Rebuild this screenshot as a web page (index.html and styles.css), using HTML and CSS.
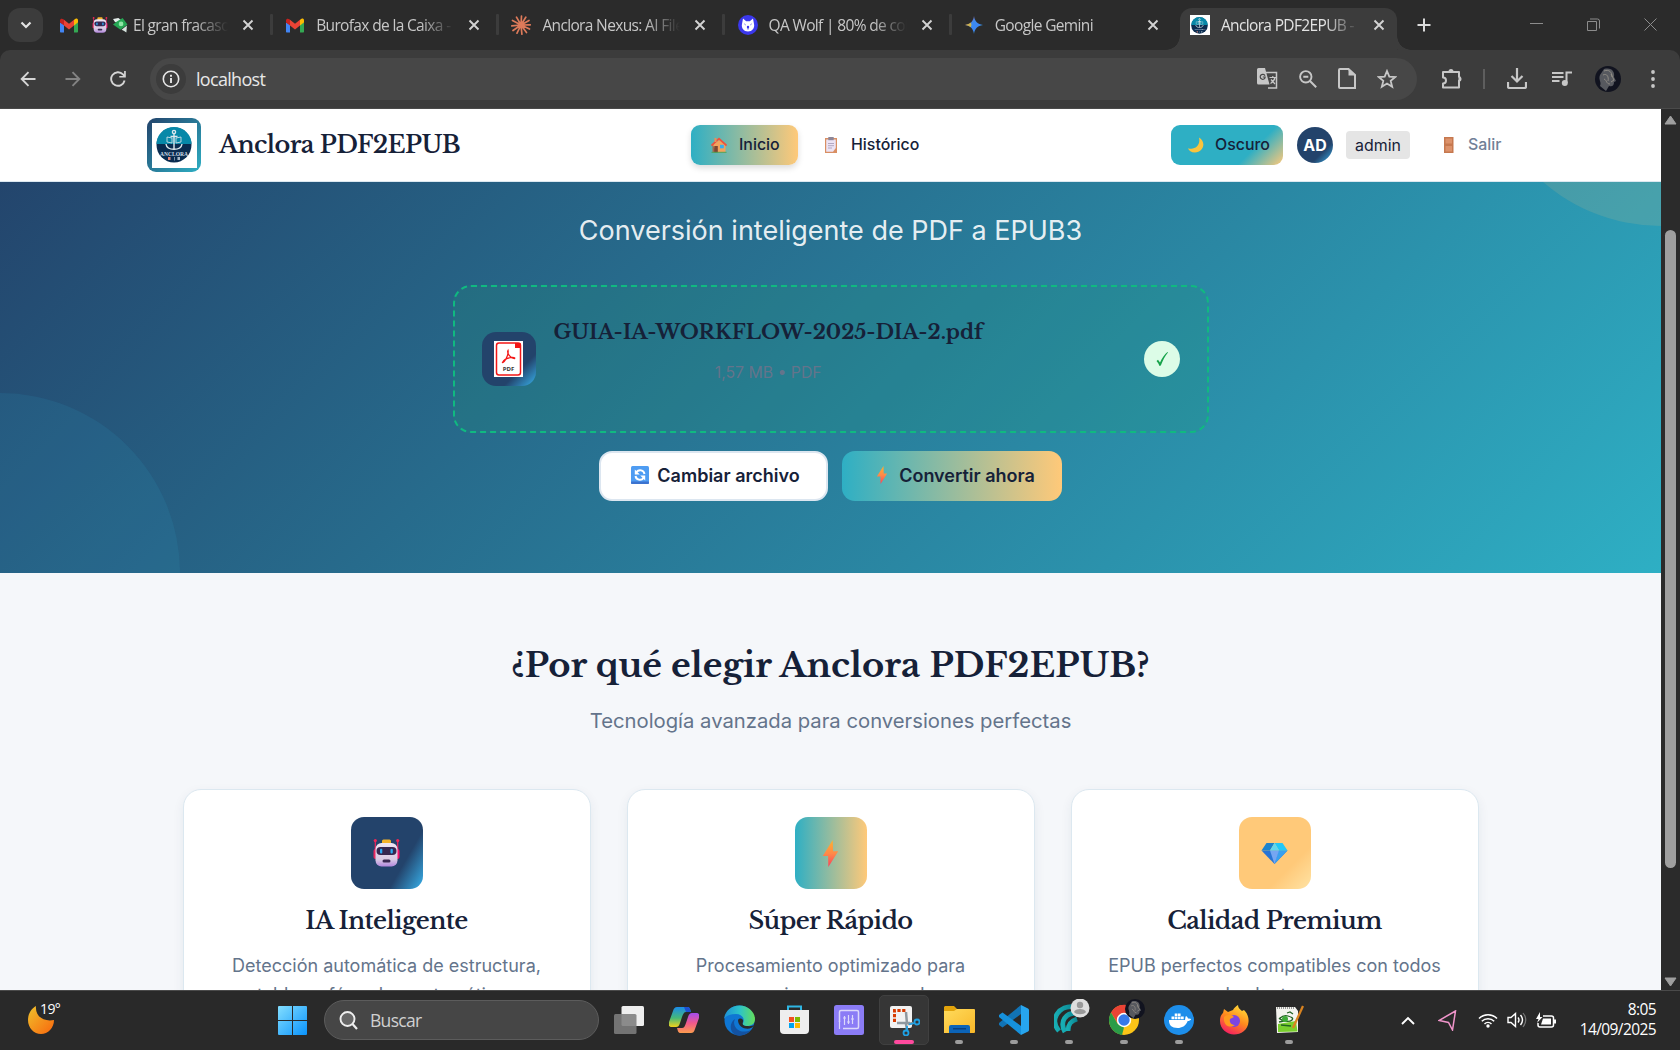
FILE: index.html
```html
<!DOCTYPE html>
<html lang="es">
<head>
<meta charset="utf-8">
<title>Anclora PDF2EPUB</title>
<link rel="stylesheet" href="styles.css">
</head>
<body>
<svg class="defs" width="0" height="0" aria-hidden="true">
  <defs>
    <linearGradient id="g-bolt" x1="0" y1="0" x2="0" y2="1"><stop offset="0" stop-color="#ffb02e"/><stop offset=".5" stop-color="#ff8a48"/><stop offset="1" stop-color="#f8405c"/></linearGradient>
    <linearGradient id="g-face" x1="0" y1="0" x2="0" y2="1"><stop offset="0" stop-color="#efe5f3"/><stop offset=".7" stop-color="#d9c9e4"/><stop offset="1" stop-color="#b287dc"/></linearGradient>
    <linearGradient id="g-moon" x1="0" y1="0" x2="1" y2="1"><stop offset="0" stop-color="#efc22c"/><stop offset="1" stop-color="#f9660d"/></linearGradient>
    <linearGradient id="g-edge" x1="0" y1="0" x2="1" y2="0"><stop offset="0" stop-color="#1d8fd8"/><stop offset=".5" stop-color="#2cc3c9"/><stop offset="1" stop-color="#64de5b"/></linearGradient>
    <linearGradient id="g-gem" x1="0" y1="0" x2="1" y2="1"><stop offset="0" stop-color="#ef4b46"/><stop offset=".4" stop-color="#3c8af0"/><stop offset=".65" stop-color="#3c86f2"/><stop offset="1" stop-color="#2ca454"/></linearGradient>
    <linearGradient id="g-win" x1="0" y1="0" x2="1" y2="1"><stop offset="0" stop-color="#83deff"/><stop offset="1" stop-color="#0a93fb"/></linearGradient>
    <linearGradient id="g-cop1" x1="0" y1="0" x2="0" y2="1"><stop offset="0" stop-color="#1b8bea"/><stop offset=".55" stop-color="#46b978"/><stop offset="1" stop-color="#f3d21b"/></linearGradient>
    <linearGradient id="g-cop2" x1="0" y1="0" x2="0" y2="1"><stop offset="0" stop-color="#a34df0"/><stop offset=".5" stop-color="#f1588c"/><stop offset="1" stop-color="#fc9c4e"/></linearGradient>
    <linearGradient id="g-fold" x1="0" y1="0" x2="1" y2="1"><stop offset="0" stop-color="#ffdb5c"/><stop offset="1" stop-color="#f9b728"/></linearGradient>
    <linearGradient id="g-fox" x1=".8" y1="0" x2=".3" y2="1"><stop offset="0" stop-color="#ffe23b"/><stop offset=".5" stop-color="#ff8a1d"/><stop offset="1" stop-color="#f51c62"/></linearGradient>
    <linearGradient id="g-cyan" x1="0" y1="0" x2="1" y2="0"><stop offset="0" stop-color="#18aeb4"/><stop offset="1" stop-color="#0a8491"/></linearGradient>

    <symbol id="gmail" viewBox="0 0 18 14"><path fill="#4285f4" d="M0 4v9c0 .6.4 1 1 1h3V6z"/><path fill="#34a853" d="M14 14h3c.6 0 1-.4 1-1V4l-4 2z"/><path fill="#fbbc04" d="M14 1.500V7l4-3V2c0-2-2-2.500-3.300-1.200z"/><path fill="#ea4335" d="M4 7V1.300l5 4 5-4V7l-5 3.900z"/><path fill="#c5221f" d="M0 2v2l4 3V1.300L3.300.8C2-.4 0 .2 0 2z"/></symbol>
    <symbol id="robot" viewBox="0 0 26 28"><path stroke="#f0225c" stroke-width="1.200" d="M1.800 2v12M24.200 2v12"/><circle cx="1.800" cy="1.600" r="1.600" fill="#ef2757"/><circle cx="24.200" cy="1.600" r="1.600" fill="#ef2757"/><rect y="10" width="4" height="10" rx="2" fill="#e8265e"/><rect x="22" y="10" width="4" height="10" rx="2" fill="#f6146c"/><rect x="8.500" y=".5" width="9" height="5" rx="1.500" fill="#f3b22b"/><rect x="2" y="4" width="22" height="23.500" rx="6" fill="url(#g-face)"/><rect x="3" y="8" width="20" height="8" rx="4" fill="#362750"/><rect x="6.500" y="9.800" width="2.300" height="4.600" rx="1" fill="#2ca9f2"/><rect x="17" y="9.800" width="2.300" height="4.600" rx="1" fill="#2ca9f2"/><rect x="9" y="20.500" width="8" height="3" rx="1.500" fill="#3a2951"/></symbol>
    <symbol id="money" viewBox="0 0 14 14"><path fill="#e6eeec" d="M0 1l5-1 4 3-7 1z"/><path fill="#25a653" d="M4 3l5-3 4.500 6L7 11 0 6z"/><circle cx="7.500" cy="5.500" r="2.200" fill="#8ee6a6"/><path fill="#d7e4df" d="M8 11l5-4-.5 6.500L10 12z"/></symbol>
    <symbol id="close" viewBox="0 0 12 12"><path d="M1.500 1.500l9 9m0-9l-9 9" fill="none" stroke="currentColor" stroke-width="1.900"/></symbol>
    <symbol id="burst" viewBox="0 0 20 20"><path stroke="#dd7a5a" stroke-width="1.700" stroke-linecap="round" d="M10 10L10.500 1M10 10L14.800 2.200M10 10L18 5.500M10 10L19.300 9.800M10 10L18.500 14M10 10L15.500 17.500M10 10L10.900 19.200M10 10L6 18.200M10 10L2 15.500M10 10L.8 10.800M10 10L1.500 5.500M10 10L5.500 2.200"/></symbol>
    <symbol id="wolf" viewBox="0 0 20 20"><circle cx="10" cy="10" r="10" fill="#3b38ec"/><path fill="#fff" d="M5 3.500l3.200 2.800h3.600L15 3.500l1 5.500c1 4-2 7.500-6 7.500S3 13 4 9z"/><path stroke="#3b38ec" d="M6.500 9l1 .8m6-.8l-1 .8M10 13v1.500"/><circle cx="10" cy="12" r="1.200" fill="#3b38ec"/></symbol>
    <symbol id="gemini" viewBox="0 0 18 18"><path fill="url(#g-gem)" d="M9 0c.8 5.500 3.500 8.200 9 9-5.500.8-8.200 3.500-9 9-.8-5.500-3.500-8.200-9-9 5.500-.8 8.200-3.500 9-9z"/><path fill="#fbc31c" d="M0 9c2.500-.4 4.400-1.200 5.900-2.400L6.500 9l-.7 2.200C4.300 10.100 2.400 9.300 0 9z" opacity=".75"/></symbol>
    <symbol id="anchor" viewBox="0 0 36 36"><circle cx="18" cy="18" r="17.500" fill="#0a2c50"/><path d="M.5 17a17.500 17 0 0 1 35 0z" fill="#0788a8"/><g fill="none" stroke="#dfe9ed" stroke-width="1.400"><circle cx="18" cy="5" r="1.600"/><path d="M18 7v15M14.500 9.500h7M10 17c.5 3.500 4 5.300 8 5.300s7.500-1.800 8-5.300"/><path stroke-width=".8" d="M11 10l5 1v5l-5-1zM25 10l-5 1v5l5-1z"/></g><text x="18" y="28.500" text-anchor="middle" font-family="Liberation Serif" font-size="5.500" font-weight="bold" fill="#cfdde5">ANCLORA</text><path fill="#e88a7a" d="M12 30h2.500v3H12z"/><path fill="#a9bac8" d="M18 30h.7v3.500H18zM21.500 30H24v3h-2.500z"/></symbol>
    <symbol id="bolt" viewBox="0 0 16 28"><path fill="url(#g-bolt)" d="M10.300 0L0 16.500h5.500L5.800 28 16 11.700h-5.300z"/></symbol>
    <symbol id="house" viewBox="0 0 16 16"><path fill="#a3694b" d="M1.500 7.500h5.800V15.500H1.500z"/><path fill="#f3a35d" d="M2 8l6-5 6.500 5v7.500H6z"/><path fill="#7d4533" d="M3.300 9h3.500v6.500H3.300z"/><path fill="#35aef0" d="M9 7.800h3.800v3.500H9z"/><path fill="none" stroke="#f0503c" stroke-width="1.700" d="M.4 8.500L8 1.600l7.600 6.900"/><path fill="#ef8e57" d="M3.500 1h2v4h-2z"/><path fill="#4ca45b" d="M.5 14.800h15v1H.5z"/></symbol>
    <symbol id="clip" viewBox="0 0 12 16"><path fill="#d98f63" d="M0 1h12v15H0z"/><path fill="#ece3f4" d="M1.200 2.500h9.600v8.500L8 14.800H1.200z"/><path fill="#8d8698" d="M3.300 0h5.400v3.200H3.300z"/><path stroke="#aba0bc" stroke-width=".9" d="M3 6.500h6M3 8.700h6M3 11h4"/></symbol>
    <symbol id="moon" viewBox="0 0 16 16"><path fill="#f9c43d" d="M11 .5c8 5 4 15-4 15-4 0-6-1.800-7-4.300C6 13.500 13 9 11 .5z"/></symbol>
    <symbol id="door" viewBox="0 0 10 16"><path fill="#c6784f" d="M0 0h9.500v16H0z"/><path fill="#dc926b" d="M1.500 1.500h6.500v5H1.500zM1.500 9h6.500v5.500H1.500z"/></symbol>
    <symbol id="refresh" viewBox="0 0 18 18"><rect width="18" height="18" rx="1.500" fill="#4e9cf2"/><rect y="15.500" width="18" height="2.500" rx="1" fill="#3c73cf"/><path fill="none" stroke="#fff" stroke-width="1.900" d="M13.500 8c-.6-4-5.500-5-8.300-1.800M4.500 10c.6 4 5.500 5 8.300 1.800"/><path fill="#fff" d="M3.800 3.500v5h5zM14.200 14.500v-5h-5z"/></symbol>
    <symbol id="diamond" viewBox="0 0 26 21"><path fill="#2874d5" d="M0 7.500h26L13 21z"/><path fill="#39a0ee" d="M17 7.500h9L13 21z"/><path fill="#75a6f2" d="M8.500 7.500h9L13 21z"/><path fill="#1b83cf" d="M5 0h8L8.500 7.500H0z"/><path fill="#22c8f8" d="M13 0h8l5 7.500h-8.500z"/><path fill="#62d7ee" d="M13 0l4.500 7.500h-9z"/></symbol>
    <symbol id="person" viewBox="0 0 26 26"><circle cx="13" cy="13" r="13" fill="#11131f"/><path fill="#57595f" d="M9 3c8-2 11 3 10 8l2 4-2 1c0 4-2 5-5 4l-3 5-6-5c2-4-2-6 0-11z"/><path fill="none" stroke="#9b958d" stroke-width=".8" d="M9 5c5-2 8 1 8 6M8 9c4-2 6 2 5 6M9 13c3 1 2 5 6 5M16 8l3 6-3 2"/></symbol>
  </defs>
</svg>

<div class="tabstrip">
  <div class="tabsearch"><svg width="12" height="8" viewBox="0 0 12 8"><path d="M1.500 1.500L6 6l4.500-4.500" fill="none" stroke="#e3e3e3" stroke-width="2.200"/></svg></div>
  <div class="tab"><span class="fav"><svg width="18" height="15"><use href="#gmail"/></svg></span><span class="ttl"><svg width="16" height="16"><use href="#robot"/></svg><svg width="15" height="15"><use href="#money"/></svg>El gran fracaso</span><svg class="x" width="12" height="12"><use href="#close"/></svg></div>
  <div class="tab"><span class="fav"><svg width="18" height="15"><use href="#gmail"/></svg></span><span class="ttl">Burofax de la Caixa -</span><svg class="x" width="12" height="12"><use href="#close"/></svg></div>
  <div class="tab"><span class="fav"><svg width="20" height="20"><use href="#burst"/></svg></span><span class="ttl">Anclora Nexus: AI File</span><svg class="x" width="12" height="12"><use href="#close"/></svg></div>
  <div class="tab"><span class="fav"><svg width="20" height="20"><use href="#wolf"/></svg></span><span class="ttl">QA Wolf | 80% de cob</span><svg class="x" width="12" height="12"><use href="#close"/></svg></div>
  <div class="tab nosep"><span class="fav"><svg width="18" height="18"><use href="#gemini"/></svg></span><span class="ttl">Google Gemini</span><svg class="x" width="12" height="12"><use href="#close"/></svg></div>
  <div class="tab active"><span class="fav white"><svg width="17" height="17"><use href="#anchor"/></svg></span><span class="ttl">Anclora PDF2EPUB -</span><svg class="x" width="12" height="12"><use href="#close"/></svg></div>
  <svg class="newtab" width="14" height="14" viewBox="0 0 14 14"><path d="M7 .5v13M.5 7h13" stroke="#dcdcdc" stroke-width="2"/></svg>
  <div class="winctl">
    <svg width="13" height="13" viewBox="0 0 13 13"><path d="M0 5.500h13"/></svg>
    <svg width="13" height="13" viewBox="0 0 13 13"><path d="M.5 3.500h9v9h-9zM3 1h7.500a2 2 0 0 1 2 2v7.500"/></svg>
    <svg width="13" height="13" viewBox="0 0 13 13"><path d="M.5.500l12 12m0-12l-12 12"/></svg>
  </div>
</div>

<div class="toolbar">
  <div class="navs">
    <svg width="16" height="16" viewBox="0 0 16 16"><path d="M15.500 8H2m6.500-6.800L1.700 8l6.800 6.800" fill="none" stroke="#d5d5d5" stroke-width="1.900"/></svg>
    <svg width="16" height="16" viewBox="0 0 16 16"><path d="M.5 8H14M7.500 1.200L14.300 8l-6.800 6.800" fill="none" stroke="#838383" stroke-width="1.900"/></svg>
    <svg width="16" height="16" viewBox="0 0 16 16"><path d="M14.600 9.500A6.800 6.800 0 1 1 13 3.400l1.500 1.800" fill="none" stroke="#d5d5d5" stroke-width="1.900"/><path d="M15.800 0v6.500H9.300V5h4.800V0z" fill="#d5d5d5"/></svg>
  </div>
  <div class="omni">
    <span class="info"><svg width="18" height="18" viewBox="0 0 18 18"><circle cx="9" cy="9" r="7.700" fill="none" stroke="#e6e6e6" stroke-width="1.600"/><path d="M9 8v5M9 4.700v2" stroke="#e6e6e6" stroke-width="1.900"/></svg></span>
    <span class="url">localhost</span>
    <div class="omni-icons">
      <svg width="21" height="21" viewBox="0 0 21 21"><path d="M9 4.500h10.500v15.500H11" fill="none" stroke="#c7c7c7" stroke-width="1.500"/><path d="M1.500 0H8l4.500 16.500H1.500A1.500 1.500 0 0 1 0 15V1.500A1.500 1.500 0 0 1 1.500 0z" fill="#c7c7c7"/><path d="M8 7.800A2.500 2.500 0 1 0 8.200 9H5.800" stroke="#484848" fill="none" stroke-width="1.200"/><path d="M12.500 9.500h6.500M15.800 8v1.500M18 9.500c-.7 3-2.500 4.800-4.500 6M14 11.500l4 4.500" stroke="#c7c7c7" fill="none" stroke-width="1.200"/></svg>
      <svg width="18" height="18" viewBox="0 0 18 18"><circle cx="6.800" cy="6.800" r="5.700" fill="none" stroke="#c7c7c7" stroke-width="1.900"/><path d="M11 11l6.200 6.200M4.300 6.800h5" stroke="#c7c7c7" stroke-width="2"/></svg>
      <svg width="18" height="21" viewBox="0 0 18 21"><path d="M2 1h8.500L17 7v13H2a1 1 0 0 1-1-1V2a1 1 0 0 1 1-1z" fill="none" stroke="#c7c7c7" stroke-width="2"/><path d="M10.500 1v6.500H17z" fill="#c7c7c7"/></svg>
      <svg width="20" height="20" viewBox="0 0 20 20"><path d="M10 2l2.300 5.600 6 .4-4.600 3.900 1.500 5.900L10 14.600l-5.200 3.200 1.500-5.900L1.700 8l6-.4z" fill="none" stroke="#c7c7c7" stroke-width="1.800"/></svg>
    </div>
  </div>
  <div class="tools">
    <svg width="21" height="21" viewBox="0 0 21 21"><path d="M2 5.500V4h16v5h.5v3.500H18v7H2v-4c4 0 4-6 0-6z" fill="none" stroke="#c7c7c7" stroke-width="2" stroke-linejoin="round"/><path d="M7.500 3.500a2.500 2.500 0 0 1 5 0zM18 8.500a2.500 2.500 0 0 1 0 5z" fill="#c7c7c7"/></svg>
    <i class="tsep"></i>
    <svg width="20" height="21" viewBox="0 0 20 21"><path d="M10 0v13M4.500 8l5.500 5.500L15.500 8M1 14v4.500a1.500 1.500 0 0 0 1.500 1.500h15a1.500 1.500 0 0 0 1.500-1.500V14" fill="none" stroke="#c7c7c7" stroke-width="2.200"/></svg>
    <svg width="20" height="16" viewBox="0 0 20 16"><path d="M0 2h11.500M0 6h11.500M0 10h7.500M14.500 12V1.500H20" fill="none" stroke="#c7c7c7" stroke-width="2"/><circle cx="12.800" cy="12" r="3" fill="#c7c7c7"/></svg>
    <svg width="26" height="26"><use href="#person"/></svg>
    <svg width="4" height="18" viewBox="0 0 4 18"><g fill="#c7c7c7"><circle cx="2" cy="2" r="1.900"/><circle cx="2" cy="9" r="1.900"/><circle cx="2" cy="16" r="1.900"/></g></svg>
  </div>
</div>

<div class="viewport">
  <div class="page">
    <header class="header">
      <div class="brand"><div class="logo"><span><svg width="36" height="36"><use href="#anchor"/></svg></span></div><span class="brand-name">Anclora PDF2EPUB</span></div>
      <nav class="nav">
        <a class="pill current"><svg width="16" height="16"><use href="#house"/></svg>Inicio</a>
        <a class="pill"><svg width="16" height="16"><use href="#clip"/></svg>Histórico</a>
      </nav>
      <div class="account">
        <a class="theme"><svg width="16" height="16"><use href="#moon"/></svg>Oscuro</a>
        <span class="avatar">AD</span>
        <span class="user">admin</span>
        <a class="exit"><svg width="10" height="16"><use href="#door"/></svg>Salir</a>
      </div>
    </header>
    <section class="hero">
      <p class="lead">Conversión inteligente de PDF a EPUB3</p>
      <div class="drop">
        <div class="fileicon"><svg width="29" height="36" viewBox="0 0 29 36"><path fill="#fff" d="M0 0h29v36H0z"/><rect x="2.500" y="2" width="24" height="32" rx="2.500" fill="none" stroke="#f31616" stroke-width="1.500"/><path d="M21 2v5h5.500V2z" fill="#f31616"/><path d="M14 9.500c-1.200 2 2 8 6.500 8 2-1.500-9-2-12 4 1.500 1 6.500-7.500 5.500-12z" fill="none" stroke="#f31616" stroke-width="1.300"/><text x="14.500" y="29.500" text-anchor="middle" font-family="Open Sans" font-weight="700" font-size="6" fill="#333">PDF</text></svg></div>
        <div class="fileinfo"><h4>GUIA-IA-WORKFLOW-2025-DIA-2.pdf</h4><p>1,57 MB • PDF</p></div>
        <div class="ok"><svg width="12" height="14" viewBox="0 0 12 14"><path d="M.5 9l1.500-1.200L4 10.500C6 6 8.500 2.500 11.500 0L12 .5C9 4 7 8 4.800 13.500L3.500 14C2.800 12 1.800 10.300.5 9z" fill="#16a34a"/></svg></div>
      </div>
      <div class="actions">
        <a class="btn light"><svg width="18" height="18"><use href="#refresh"/></svg>Cambiar archivo</a>
        <a class="btn warm"><svg width="18" height="18"><use href="#bolt"/></svg>Convertir ahora</a>
      </div>
    </section>
    <section class="why">
      <h2>¿Por qué elegir Anclora PDF2EPUB?</h2>
      <p class="sub">Tecnología avanzada para conversiones perfectas</p>
      <div class="cards">
        <article class="card"><div class="ico navy"><svg width="27" height="28"><use href="#robot"/></svg></div><h3>IA Inteligente</h3><p>Detección automática de estructura, tablas y fórmulas matemáticas</p></article>
        <article class="card"><div class="ico mix"><svg width="27" height="27"><use href="#bolt"/></svg></div><h3>Súper Rápido</h3><p>Procesamiento optimizado para conversiones en segundos</p></article>
        <article class="card"><div class="ico gold"><svg width="27" height="21"><use href="#diamond"/></svg></div><h3>Calidad Premium</h3><p>EPUB perfectos compatibles con todos los lectores</p></article>
      </div>
    </section>
  </div>
  <div class="scroll">
    <svg width="13" height="10" viewBox="0 0 13 10"><path d="M6.500 1L12 9H1z" fill="#9f9f9f" stroke="#9f9f9f" stroke-linejoin="round"/></svg>
    <div class="thumb"></div>
    <svg width="13" height="10" viewBox="0 0 13 10"><path d="M6.500 9L12 1H1z" fill="#9f9f9f" stroke="#9f9f9f" stroke-linejoin="round"/></svg>
  </div>
</div>

<div class="taskbar">
  <div class="weather"><svg width="26" height="29" viewBox="0 0 26 29"><path fill="url(#g-moon)" d="M8 0C3 3 0 8 0 14c0 8 6 14 13 14s13-6 13-14C15 16 7 10 8 0z"/></svg><span>19°</span></div>
  <div class="start"><svg width="29" height="29" viewBox="0 0 29 29"><path fill="url(#g-win)" d="M0 1a1 1 0 0 1 1-1h13v14H0zM15 0h13a1 1 0 0 1 1 1v13H15zM0 15h14v14H1a1 1 0 0 1-1-1zM15 15h14v13a1 1 0 0 1-1 1H15z"/></svg></div>
  <div class="search"><svg width="19" height="19" viewBox="0 0 19 19"><circle cx="8.500" cy="8" r="7" fill="#666" stroke="#eee" stroke-width="1.900"/><path d="M13.500 13l4.500 5" stroke="#eee" stroke-width="2.200"/></svg>Buscar</div>
  <div class="apps">
    <div class="app"><svg width="30" height="28" viewBox="0 0 30 28"><rect x="7.500" width="22.500" height="20" rx="1.500" fill="#eee"/><rect y="8" width="22.500" height="20" rx="1.500" fill="#7d7d7d" opacity=".88"/></svg></div>
    <div class="app"><svg width="30" height="26" viewBox="0 0 30 26"><path fill="url(#g-cop1)" d="M8 0h10c3 0 3 2 4 5h-5c-2 0-3 2-4 5l-2 6c-1 3-2 4-4 4H3c-3 0-4-2-3-5L4 4c1-3 2-4 4-4z"/><path fill="#1d50d2" d="M15 0h3c3 0 3 2 4 5h-5z"/><path fill="url(#g-cop2)" d="M22 26H12c-3 0-3-2-4-5h5c2 0 3-2 4-5l2-6c1-3 2-4 4-4h4c3 0 4 2 3 5l-4 11c-1 3-2 4-4 4z"/></svg></div>
    <div class="app"><svg width="31" height="31" viewBox="0 0 31 31"><circle cx="15.500" cy="15.500" r="15" fill="#0f76d3"/><path fill="url(#g-edge)" d="M0 14C1 6 7 .5 15.500.5 24 .5 31 7 31 14c0 5-4 7-8 7-3 0-5-.8-4-3 2-3 0-9-7-9-6 0-10 2-12 5z"/><path fill="#1352a1" d="M10 17c0 8 8 12 17 8-5 6-13 7-17 4-5-4-4-12 1-15z"/><path fill="#292929" d="M14 15c2-3 6-1 5 2-1 2 0 4 4 4 4 .5 6-.5 7-1-2 6-16 5-16-5z"/></svg></div>
    <div class="app"><svg width="29" height="30" viewBox="0 0 29 30"><path d="M8 7V1.500h13V7" fill="none" stroke="#2fb6e3" stroke-width="2"/><path fill="#eee" d="M0 5h29v20a4 4 0 0 1-4 4H4a4 4 0 0 1-4-4z"/><path fill="#f25022" d="M9 12h5v5H9z"/><path fill="#7fba00" d="M15 12h5v5h-5z"/><path fill="#00a4ef" d="M9 18h5v5H9z"/><path fill="#ffb900" d="M15 18h5v5h-5z"/></svg></div>
    <div class="app"><svg width="30" height="30" viewBox="0 0 30 30"><rect width="30" height="30" rx="2.500" fill="#8b7cf6"/><path d="M5.500 17V7q0-1.500 1.500-1.500h16q1.500 0 1.500 1.500v15q0 1.500-1.500 1.500H9" fill="none" stroke="#dcd8fb" stroke-width="1.500"/><path d="M5.500 16v8M10.500 11v9M14.500 10v9M18.500 10v9M9 13h3M13 17h3M17 14h3" stroke="#dcd8fb" stroke-width="1.200" fill="none"/></svg></div>
    <div class="app sel run"><svg width="31" height="31" viewBox="0 0 31 31"><rect x="1" y="1" width="22" height="22" rx="2" fill="#f2f2f2"/><path d="M5.500 17V5.500H18" fill="none" stroke="#d83b01" stroke-width="3" stroke-dasharray="3.200 1.600"/><path d="M17 7l1 12M8 18h13M17 19l1 6M19 19l5-1" stroke="#8f989f" stroke-width="2.500" fill="none"/><g fill="none" stroke="#1fa1e4" stroke-width="1.800"><circle cx="28" cy="17" r="2.500"/><circle cx="17" cy="28" r="2.500"/><path d="M25.500 18L20 19.500M18 25.500V21"/></g></svg></div>
    <div class="app run"><svg width="31" height="28" viewBox="0 0 31 28"><path fill="#e2a30b" d="M1 0h9l4 4v6H0V1z"/><path fill="url(#g-fold)" d="M0 5h10l3-2h17a1 1 0 0 1 1 1v22a1 1 0 0 1-1 1H0z"/><path fill="#0c64b8" d="M5 27v-6a2 2 0 0 1 2-2h17a2 2 0 0 1 2 2v6z"/><path d="M9 22h13v1.500H9z" fill="#073f80"/></svg></div>
    <div class="app run"><svg width="30" height="30" viewBox="0 0 30 30"><path d="M22 0l7 3.500q1 .5 1 1.500v20q0 1-1 1.500L22 30z" fill="#27a5ee"/><path d="M22 0v9L3.500 22.500 0 20v-2z" fill="#1173b5"/><path d="M0 12v-2l3.500-2.500L22 21v9z" fill="#1691dc"/></svg></div>
    <div class="app run up"><svg width="36" height="36" viewBox="0 0 36 36"><g fill="none" stroke="url(#g-cyan)" stroke-width="4.800"><path d="M21 8C5 5-5 21 5 32"/><path d="M22 14c-10 0-17 8-11 19"/><path d="M23 20c-6 2-9 5-9 12"/></g><circle cx="26" cy="9" r="9.500" fill="#dedede"/><circle cx="26" cy="6" r="3.200" fill="#999"/><path fill="#999" d="M20 13c1-4 11-4 12 0-2 3-10 3-12 0z"/></svg></div>
    <div class="app run up"><svg width="36" height="36" viewBox="0 0 36 36"><circle cx="15" cy="21" r="15" fill="#fcc417"/><path fill="#ea4335" d="M2 13.500A15 15 0 0 1 28.500 14H15l-6.500 10z"/><path fill="#2b9c48" d="M2 13.500l6.500 11 6.500 4-2 7.400A15 15 0 0 1 2 13.500z"/><circle cx="15" cy="21" r="7.200" fill="#fff"/><circle cx="15" cy="21" r="5.700" fill="#3779e9"/><svg x="16" y="0" width="20" height="20"><use href="#person"/></svg></svg></div>
    <div class="app run"><svg width="30" height="30" viewBox="0 0 30 30"><circle cx="15" cy="15" r="15" fill="#1d8eea"/><path fill="#fff" d="M5 15h16c.5-1.500 0-2.500 1-4 1.300.7 1.800 1.500 2 2.500 1-.2 2.500 0 3.200.5-.7 1.500-2 2-3.500 2-2 5-6 7-10 7-6 0-9-3-8.700-8z"/><path fill="#fff" d="M7.500 11.500h2.700v2.700H7.500zM10.700 11.500h2.700v2.700h-2.700zM13.900 11.500h2.700v2.700h-2.700zM17 11.500h2.700v2.700H17zM10.700 8.400h2.700v2.700h-2.700zM13.900 8.400h2.700v2.700h-2.700z"/></svg></div>
    <div class="app"><svg width="29" height="30" viewBox="0 0 29 30"><path fill="url(#g-fox)" d="M3 8l1-4 4 3 5-2c1-2 3-4 5-5 0 3 2 4 4 6l2-1c3 3 5 7 4.500 12C28 25 21 29.500 14 29.500S0 24 0 16c0-4 1-6 3-8z"/><circle cx="14" cy="16" r="6" fill="#7d45e3"/><path fill="#ff9a1e" d="M4 12c3-3 7-3 10 0l-4 2c-1 4 2 6 5 6-6 4-12 0-11-8z"/></svg></div>
    <div class="app run"><svg width="29" height="30" viewBox="0 0 29 30"><path fill="#f4f4ef" d="M1 2h19l3 4v21L2 28z"/><path d="M3 19l18-3 1.500 10.500L3 27z" fill="#79cf2d"/><path stroke="#999" stroke-width="2" stroke-dasharray="1 1" d="M2 3h18"/><path d="M4 14c3-3 6-4 9-3s6 2 4 4-8 2-12-1M4 17l5-1M12 8l3-1 3 2M6 20l10 1" fill="none" stroke="#246324" stroke-width="1.300"/><circle cx="10" cy="14" r="3" fill="#3fab39"/><path d="M18 23L28 1" stroke="#d98320" stroke-width="2.300"/></svg></div>
  </div>
  <div class="tray">
    <svg width="14" height="9" viewBox="0 0 14 9"><path d="M1 8l6-6 6 6" fill="none" stroke="#fff" stroke-width="1.900"/></svg>
    <svg width="19" height="21" viewBox="0 0 19 21"><path d="M17.500 1L1 10.500l9.500 2 4 7.500z" fill="none" stroke="#f195cb" stroke-width="1.500"/></svg>
    <svg width="20" height="16" viewBox="0 0 20 16"><g fill="none" stroke="#fff" stroke-width="1.500"><path d="M1 6.500a12.500 12.500 0 0 1 18 0M3.800 9.300a8.700 8.700 0 0 1 12.400 0M6.500 12a5 5 0 0 1 7 0"/></g><circle cx="10" cy="14" r="1.700" fill="#fff"/></svg>
    <svg width="20" height="16" viewBox="0 0 20 16"><path d="M1 5.500h3L8.500 1.500v13L4 10.500H1zM11 5.500q2 2.500 0 5M13.500 3q4 5 0 10" fill="none" stroke="#fff" stroke-width="1.400"/><path d="M16 1q5.500 7 0 14" fill="none" stroke="#777" stroke-width="1.200"/></svg>
    <svg width="20" height="17" viewBox="0 0 20 17"><path d="M7 4h8.500q2 0 2 2v7q0 2-2 2H4q-2 0-2-2v-2" fill="none" stroke="#fff" stroke-width="1.500"/><path d="M7 6.500h8v6H5z" fill="#fff"/><path d="M18 7.500h2v4h-2zM4 0L0 7h2.500L1 11l5.500-6H4z" fill="#fff"/></svg>
    <div class="clock"><span>8:05</span><span>14/09/2025</span></div>
  </div>
</div>
</body>
</html>
```
FILE: styles.css
```css
* { box-sizing: border-box; }
body { margin: 0; width: 1680px; height: 1050px; overflow: hidden; display: flex; flex-direction: column; font-family: Inter, "Liberation Sans", sans-serif; background: #2b2b2b; color: #162138; }
.defs { position: absolute; }
svg { display: block; flex: none; }
p, h2, h3, h4 { margin: 0; }

/* Browser chrome */
.tabstrip { height: 50px; flex: none; display: flex; align-items: flex-end; padding-left: 8px; background: #2b2b2b; font: 15.500px "Open Sans", sans-serif; letter-spacing: -.65px; color: #c7c7c7; }
.tabsearch { width: 35px; height: 34px; margin: 0 6px 8px 0; border-radius: 12px; background: #3c3c3c; display: grid; place-items: center; }
.tab { width: 226.200px; height: 42px; display: flex; align-items: center; padding: 0 0 8px 10px; position: relative; flex: none; }
.tab::after { content: ""; position: absolute; left: 221px; top: 6px; width: 3px; height: 21px; background: #3c3c3c; border-radius: 1px; }
.tab.nosep::after { display: none; }
.fav { width: 20px; height: 20px; display: grid; place-items: center; flex: none; }
.fav.white { background: #fff; }
.ttl { width: 138px; margin-left: 11px; overflow: hidden; white-space: pre; display: flex; align-items: center; flex: none; -webkit-mask-image: linear-gradient(90deg, #000 75%, transparent); mask-image: linear-gradient(90deg, #000 75%, transparent); }
.tab:nth-child(2) .ttl { margin-left: 13px; width: 136px; }
.ttl svg { margin-right: 5px; }
.x { margin-left: 14px; color: #d3d3d3; }
.tab.active { width: 217px; background: #3c3c3c; border-radius: 12px 12px 0 0; color: #e3e3e3; }
.tab.active::before { content: ""; position: absolute; left: -14px; bottom: 0; width: 14px; height: 14px; background: radial-gradient(circle at 0 0, transparent 13.500px, #3c3c3c 14px); }
.tab.active::after { left: 217px; top: auto; bottom: 0; width: 14px; height: 14px; background: radial-gradient(circle at 100% 0, transparent 13.500px, #3c3c3c 14px); }
.newtab { margin: 0 0 18px 20px; }
.winctl { margin: 0 23px 19px auto; display: flex; gap: 44px; }
.winctl path { fill: none; stroke: #8c8c8c; }

.toolbar { height: 59px; flex: none; display: flex; align-items: center; background: #3c3c3c; padding-bottom: 1px; border-bottom: 1px solid #4a4a4a; border-radius: 10px 10px 0 0; }
.navs { display: flex; gap: 29px; padding-left: 20px; width: 150px; }
.omni { width: 1267px; height: 42px; border-radius: 21px; background: #474747; display: flex; align-items: center; padding: 0 20px 0 6px; }
.info { width: 30px; height: 30px; border-radius: 50%; background: #3c3c3c; display: grid; place-items: center; }
.url { margin-left: 10px; font: 18px "Open Sans", sans-serif; letter-spacing: -.7px; color: #e8e8e8; }
.omni-icons { margin-left: auto; display: flex; gap: 21px; align-items: center; }
.tools { display: flex; align-items: center; padding-left: 24px; }
.tools > * { margin-right: 22px; }
.tools .tsep { width: 2px; height: 20px; background: #5e5e5e; margin: 0 22px 0 -1px; }
.tools > :nth-child(3), .tools > :nth-child(4) { margin-right: 25px; }
.tools > :nth-child(5) { margin: 0 30px 0 -2px; }

/* Page */
.viewport { height: 881px; flex: none; display: flex; overflow: hidden; }
.page { width: 1661px; height: 881px; overflow: hidden; background: #f5f7fa; }
.header { height: 73px; background: #fff; border-bottom: 1px solid #dce8f0; padding: 0 147px; display: grid; grid-template-columns: 544px 480px 1fr; align-items: center; font-size: 15.900px; font-weight: 500; }
.brand { display: flex; align-items: center; gap: 18px; }
.logo { width: 54px; height: 54px; border-radius: 9px; background: linear-gradient(135deg, #23436b, #2eafc4); display: grid; place-items: center; }
.logo span { width: 45px; height: 45px; background: #fff; display: grid; place-items: center; }
.brand-name, h2, h3, h4 { font-family: "Libre Baskerville", "Liberation Serif", serif; font-weight: 700; white-space: nowrap; }
.brand-name { font-size: 24px; font-weight: 600; letter-spacing: -.6px; padding-bottom: 2px; }
.nav { display: flex; gap: 5px; }
.pill { height: 40px; padding: 0 18px 1px 20px; border-radius: 9px; display: flex; align-items: center; gap: 12px; }
.current { width: 107px; background: linear-gradient(90deg, #2eafc4, #ffc979); box-shadow: 0 3px 6px rgba(0, 0, 0, .14); }
.account { display: flex; align-items: center; }
.theme { width: 112px; height: 40px; padding: 0 0 1px 17px; gap: 11px; border-radius: 9px; display: flex; align-items: center; background: linear-gradient(135deg, #2eafc4 70%, #ffc979); }
.avatar { width: 36px; height: 36px; margin-left: 14px; border-radius: 50%; background: linear-gradient(135deg, #23436b 70%, #38b0ea); color: #fff; font-weight: 700; display: grid; place-items: center; }
.user { width: 64px; height: 28px; margin-left: 13px; border-radius: 4px; background: #e5e5e5; display: grid; place-items: center; font-weight: 400; }
.exit { margin-left: 34px; padding-bottom: 1px; display: flex; gap: 14px; align-items: center; color: #718096; }

.hero { height: 391px; position: relative; overflow: hidden; display: flex; flex-direction: column; align-items: center; background: linear-gradient(135deg, #23436b, #2eafc4) 0 100% / 100% 430px; }
.hero::before, .hero::after { content: ""; position: absolute; width: 360px; height: 360px; border-radius: 50%; }
.hero::before { left: -180px; bottom: -180px; background: rgba(46, 160, 200, .13); }
.hero::after { right: -180px; top: -316px; background: rgba(255, 201, 121, .13); }
.hero > * { position: relative; z-index: 1; }
.lead { margin-top: 32px; font-size: 27px; line-height: 34px; color: rgba(255, 255, 255, .9); white-space: nowrap; }
.drop { width: 756px; height: 148px; margin-top: 37px; padding: 0 27px; border: 2px dashed #10b981; border-radius: 18px; background: rgba(30, 150, 115, .2); display: flex; align-items: center; }
.fileicon { width: 54px; height: 54px; border-radius: 14px; background: linear-gradient(135deg, #23436b 70%, #38b0ea); display: grid; place-items: center; }
.fileinfo { margin: 0 auto 0 18px; text-align: center; padding-bottom: 18px; }
h4 { font-size: 20.250px; line-height: 32px; }
.fileinfo p { margin-top: 14px; font-size: 15.800px; line-height: 22px; color: #64748b; }
.ok { width: 36px; height: 36px; border-radius: 50%; background: #dcfce7; display: grid; place-items: center; }
.actions { display: flex; gap: 14px; margin-top: 18px; }
.btn { height: 50px; border-radius: 13px; display: flex; align-items: center; justify-content: center; gap: 8px; padding: 0 0 2px 4px; font-size: 18px; font-weight: 600; white-space: nowrap; }
.light { width: 229px; background: #fff; border: 2px solid #dce6f0; }
.warm { width: 220px; background: linear-gradient(90deg, #2eafc4, #ffc979); }

.why { text-align: center; padding-top: 68px; }
h2 { font-size: 33.750px; line-height: 48px; }
.sub { margin-top: 17px; font-size: 20.250px; line-height: 30px; color: #64748b; }
.cards { display: grid; grid-template-columns: repeat(3, 408px); gap: 36px; justify-content: center; margin-top: 53px; }
.card { height: 270px; padding: 27px 30px; background: #fff; border: 1px solid #dce8f0; border-radius: 18px; box-shadow: 0 4px 12px rgba(30, 50, 80, .07); }
.ico { width: 72px; height: 72px; margin: 0 auto; border-radius: 13px; display: grid; place-items: center; }
.navy { background: linear-gradient(120deg, #23436b 70%, #38b0ea); }
.mix { background: linear-gradient(90deg, #2eafc4, #ffc979); }
.gold { background: linear-gradient(135deg, #ffc979 70%, #ffe3a4); }
h3 { font-size: 24px; font-weight: 600; letter-spacing: -.6px; line-height: 34px; margin-top: 15px; }
.card p { margin-top: 13px; font-size: 18px; line-height: 29px; color: #64748b; }

.scroll { width: 19px; background: #2b2b2b; display: flex; flex-direction: column; align-items: center; padding: 6px 0 3px; }
.thumb { width: 11px; height: 638px; margin: 105px 0 109px; border-radius: 6px; background: #9f9f9f; }

/* Taskbar */
.taskbar { height: 60px; flex: none; background: #292929; border-top: 1px solid #4a4a4a; padding-bottom: 1px; display: flex; align-items: center; color: #fff; font: 15.500px "Open Sans", sans-serif; letter-spacing: -.6px; }
.weather { width: 278px; padding-left: 28px; display: flex; }
.weather span { margin: -7px 0 0 -14px; font-size: 14px; line-height: 20px; }
.search { width: 275px; height: 40px; margin-left: 17px; padding-left: 14px; border-radius: 20px; background: #464646; border: 1px solid #5c5c5c; display: flex; align-items: center; gap: 12px; font-size: 17.500px; letter-spacing: -.7px; color: #d0d0d0; }
.apps { display: flex; gap: 5px; margin-left: 5px; }
.app { width: 50px; height: 50px; border-radius: 5px; display: grid; place-items: center; position: relative; }
.sel { background: #363636; border: 1px solid #404040; }
.run::after { content: ""; position: absolute; left: 21px; bottom: 1px; width: 8px; height: 4px; border-radius: 2px; background: #9c9c9c; }
.sel.run::after { left: 14px; width: 20px; bottom: 0; background: #ff4a9e; }
.up svg { margin: -6px 0 0 6px; }
.up svg svg { margin: 0; }
.tray { margin-left: auto; padding-right: 24px; display: flex; align-items: center; }
.tray svg { margin-right: 9px; }
.tray svg:nth-child(1) { margin-right: 23px; }
.tray svg:nth-child(2) { margin-right: 21px; }
.clock { width: 91px; display: flex; flex-direction: column; align-items: flex-end; line-height: 20px; padding-bottom: 2px; }
```
